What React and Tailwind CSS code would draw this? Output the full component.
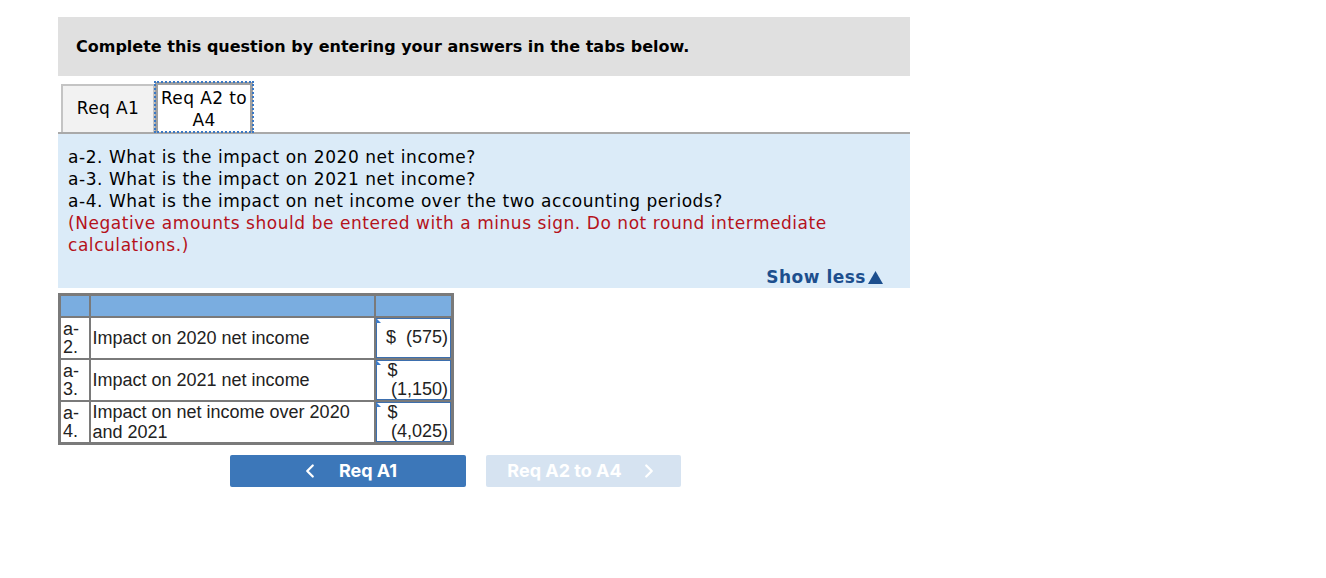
import { ChevronLeft, ChevronRight } from "lucide-react";

const verdana = { fontFamily: '"DejaVu Sans", Verdana, sans-serif' };

const rows = [
  { id: ["a-", "2."], label: "Impact on 2020 net income", value: "$\u00a0 (575)", oneLine: true },
  { id: ["a-", "3."], label: "Impact on 2021 net income", value: "(1,150)" },
  { id: ["a-", "4."], label: "Impact on net income over 2020 and 2021", value: "(4,025)" },
];

const InputCell = ({ row }) => (
  <div className="relative h-[40px] border border-[#3d6fae] bg-white px-[2px] text-right leading-[19px]">
    <span className="absolute left-[-1px] top-[-1px] h-0 w-0 border-l-[5px] border-t-[5px] border-l-[#3d7cc9] border-t-transparent" />
    {row.oneLine ? (
      <div className="flex h-full items-center justify-end">{row.value}</div>
    ) : (
      <div className="flex h-full flex-col justify-center">
        <div className="pl-[9px] text-left">$</div>
        <div>{row.value}</div>
      </div>
    )}
  </div>
);

const App = () => {
  return (
    <div className="min-h-[578px] w-[1326px] bg-white pl-[58px] pt-[17px] text-black" style={verdana}>
      <div className="w-[852px]">
        <div className="flex h-[59px] items-center bg-[#e0e0e0] pl-[18px] text-[16px] font-bold">
          Complete this question by entering your answers in the tabs below.
        </div>

        <div className="mt-[6px] flex items-end border-b-2 border-[#a9a9a9] pl-[3px] text-[17px] tracking-[0.4px]">
          <div className="flex h-[48px] w-[94px] items-center justify-center border-2 border-b-0 border-[#c4c4c4] bg-[#f2f2f2]">
            Req A1
          </div>
          <div className="outline-2 outline-dotted outline-[#3a78c4] -outline-offset-1 flex h-[50px] w-[98px] flex-col items-center justify-center border-[3px] border-b-0 border-[#a0a0a0] bg-white leading-[22px]">
            <span>Req A2 to</span>
            <span>A4</span>
          </div>
        </div>

        <div className="h-[154px] bg-[#dbebf8] px-[10px] pt-[12px] text-[17px] leading-[22px] tracking-[0.55px]">
          <p>a-2. What is the impact on 2020 net income?</p>
          <p>a-3. What is the impact on 2021 net income?</p>
          <p>a-4. What is the impact on net income over the two accounting periods?</p>
          <p className="text-[#b5121b]">
            (Negative amounts should be entered with a minus sign. Do not round intermediate calculations.)
          </p>
          <div className="mt-[10px] flex items-center justify-end gap-[2px] pr-[17px] font-bold tracking-[0.5px] text-[#1d4f8e]">
            <span>Show less</span>
            <svg width="15" height="13" viewBox="0 0 15 13" className="mt-[1px]">
              <polygon points="7.5,0 15,13 0,13" fill="#1d4f8e" />
            </svg>
          </div>
        </div>
      </div>

      <table
        className="mt-[5px] border-collapse border-[3px] border-[#7a7a7a] text-[18px] text-[#222]"
        style={{ fontFamily: '"Liberation Sans", Arial, sans-serif' }}
      >
        <thead>
          <tr className="h-[22px] bg-[#7aade0]">
            <th className="w-[30px] border-2 border-[#7a7a7a] p-0" />
            <th className="w-[285px] border-2 border-[#7a7a7a] p-0" />
            <th className="w-[78px] border-2 border-[#7a7a7a] p-0" />
          </tr>
        </thead>
        <tbody>
          {rows.map((row) => (
            <tr key={row.label} className="h-[41px]">
              <td className="border-2 border-[#7a7a7a] px-[2px] py-0 align-middle leading-[18px]">
                <div>{row.id[0]}</div>
                <div>{row.id[1]}</div>
              </td>
              <td className="border-2 border-[#7a7a7a] px-[2px] py-0 leading-[20px]">{row.label}</td>
              <td className="border-2 border-[#7a7a7a] p-0">
                <InputCell row={row} />
              </td>
            </tr>
          ))}
        </tbody>
      </table>

      <div className="mt-[10px] flex gap-[20px] pl-[172px]" style={{ fontFamily: "Inter, sans-serif" }}>
        <button className="flex h-[32px] w-[236px] items-center justify-center gap-[18px] rounded-[2px] bg-[#3c77b9] text-[18px] font-bold text-white">
          <ChevronLeft size={22} strokeWidth={2.5} />
          <span>Req A1</span>
        </button>
        <button className="flex h-[32px] w-[195px] items-center justify-center gap-[16px] rounded-[2px] bg-[#d6e3f1] text-[18px] font-bold text-white">
          <span>Req A2 to A4</span>
          <ChevronRight size={22} strokeWidth={2.5} />
        </button>
      </div>
    </div>
  );
};

export default App;
